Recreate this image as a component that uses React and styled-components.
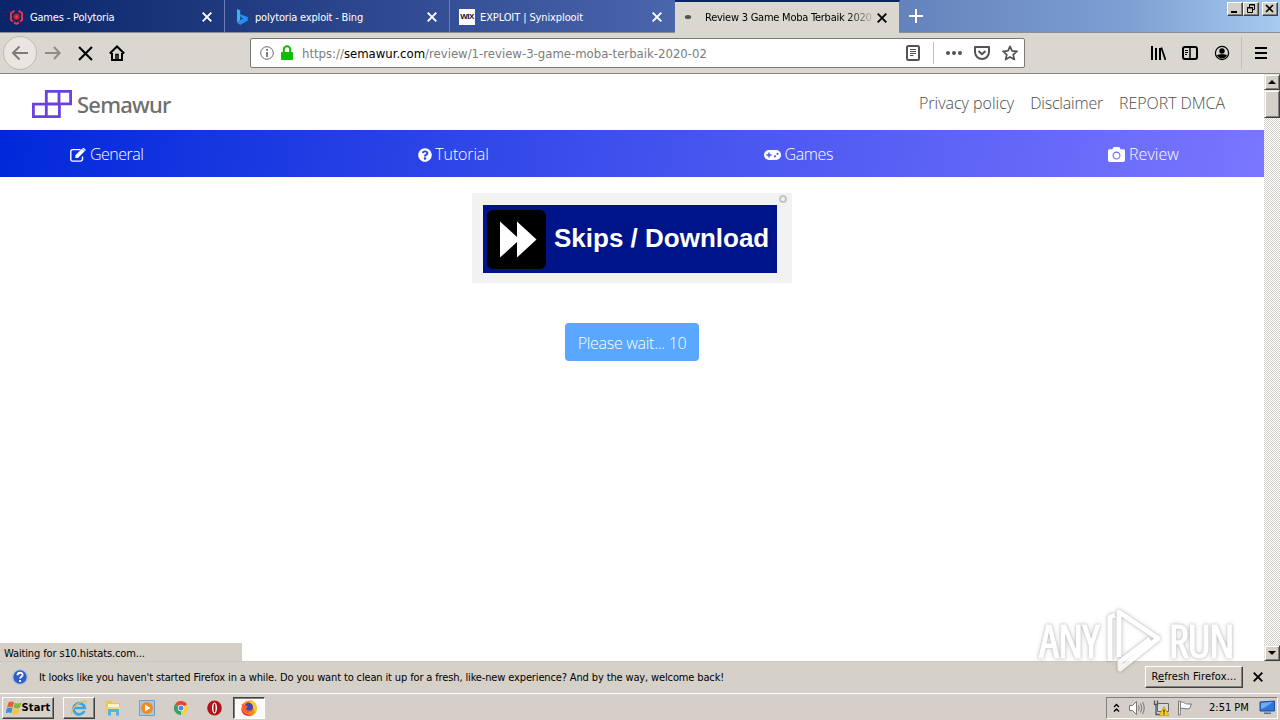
import React from "react";
import styled, { createGlobalStyle, css } from "styled-components";
import { FaEdit, FaQuestionCircle, FaCamera } from "react-icons/fa";

const Global = createGlobalStyle`
  * { box-sizing: border-box; }
  body { margin: 0; background: #fff; overflow: hidden; }
`;

const ui = css`font-family: "DejaVu Sans Condensed", "DejaVu Sans", sans-serif; font-stretch: condensed; font-size: 11px;`;
const light = css`font-family: "Open Sans", "Noto Sans", sans-serif; font-weight: 300; font-stretch: normal;`;

const Desktop = styled.div`
  ${ui}
  width: 1280px;
  height: 720px;
  display: flex;
  flex-direction: column;
  position: relative;
  color: #000;
  overflow: hidden;
`;

const Text = styled.span`
  white-space: pre;
  letter-spacing: ${(p) => p.$track || 0}px;
`;

/* tab strip */
const TabStrip = styled.header`
  height: 33px;
  flex: none;
  display: flex;
  align-items: flex-start;
  background: linear-gradient(90deg, #0a246a 0%, #4762a8 50%, #6685be 72%, #7d9fd2 88%, #a6caf0 100%);
  border-bottom: 1px solid #8b8f96;
`;
const Tab = styled.div`
  width: 225px;
  height: ${(p) => (p.$active ? 33 : 32)}px;
  display: flex;
  align-items: center;
  padding: ${(p) => (p.$active ? 0 : 2)}px 12px 0 9px;
  color: ${(p) => (p.$active ? "#000" : "#fff")};
  background: ${(p) => (p.$active ? "#dad6d0" : "transparent")};
  border-top: ${(p) => (p.$active ? "2px solid #0a246a" : "0")};
  border-right: 1px solid ${(p) => (p.$last ? "transparent" : "#6a80b4")};
  background-clip: padding-box;
  & > svg { flex: none; }
`;
const TabTitle = styled(Text)`
  flex: 1;
  margin-left: ${(p) => p.$gap}px;
  margin-right: ${(p) => (p.$fade ? 4 : 8)}px;
  ${(p) => p.$fade && css`mask-image: linear-gradient(90deg, #000 84%, transparent 102%);`}
`;
const WixBadge = styled.span`
  width: 16px;
  height: 16px;
  background: #fff;
  color: #111;
  font: 700 8px/16px "Liberation Sans", sans-serif;
  letter-spacing: -0.6px;
  text-align: center;
`;
const NewTab = styled.div`
  flex: 1;
  padding: 9px 0 0 9px;
`;
const WindowButtons = styled.div`
  display: flex;
  padding: 2px 2px 0 0;
`;
const WinButton = styled.span`
  width: 16px;
  height: 14px;
  margin-left: ${(p) => (p.$gap ? 3 : 0)}px;
  background: #d4d0c8;
  border: 1px solid;
  border-color: #fff #404040 #404040 #fff;
  box-shadow: inset -1px -1px #808080;
  svg { display: block; }
`;

/* toolbar */
const Toolbar = styled.div`
  height: 41px;
  flex: none;
  display: flex;
  align-items: center;
  background: #dad6d0;
  border-bottom: 1px solid #8a8782;
  padding: 0 11px 0 3px;
`;
const BackButton = styled.span`
  width: 34px;
  height: 34px;
  border: 1px solid #bdb9b3;
  border-radius: 50%;
  background: #e9e6e2;
  display: grid;
  place-items: center;
`;
const Tool = styled.span`
  width: 32px;
  height: 32px;
  display: grid;
  place-items: center;
`;
const AddressBar = styled.div`
  width: 775px;
  height: 30px;
  margin-left: 117px;
  background: #fff;
  border: 1px solid #7b7974;
  border-radius: 2px;
  display: flex;
  align-items: center;
  padding: 0 6px 0 9px;
`;
const LockIcon = styled.svg`
  margin-left: 6px;
`;
const Url = styled(Text)`
  flex: 1;
  margin-left: 8px;
  font-size: 13px;
  color: #7c7c7c;
  b { font-weight: 400; color: #000; }
`;
const Divider = styled.span`
  width: 1px;
  height: ${(p) => p.$h}px;
  background: #c3c0bb;
`;
const Actions = styled.div`
  display: flex;
  align-items: center;
  gap: ${(p) => p.$gap}px;
  margin-left: ${(p) => p.$left || 0}px;
`;

/* page */
const Viewport = styled.main`
  height: 587px;
  flex: none;
  display: flex;
  position: relative;
`;
const Page = styled.div`
  ${light}
  width: 1264px;
  background: #fff;
  font-size: 16px;
`;
const SiteHeader = styled.div`
  height: 56px;
  display: flex;
  align-items: center;
  justify-content: space-between;
  padding: 4px 39px 0 32px;
`;
const Brand = styled.div`
  display: flex;
  align-items: center;
  color: #6f6f6f;
  font: 500 22px/28px "Noto Sans", "Open Sans", sans-serif;
  gap: 5px;
`;
const SiteLinks = styled.nav`
  display: flex;
  gap: 16px;
  padding-bottom: 2px;
  color: #4c4c4c;
`;
const SiteNav = styled.nav`
  height: 47px;
  display: flex;
  align-items: center;
  padding: 2px 85px 0 70px;
  justify-content: space-between;
  color: #fff;
  background: linear-gradient(100deg, #0028da 0%, #3a4deb 45%, #7a76ff 100%);
`;
const NavItem = styled.span`
  display: flex;
  align-items: center;
  gap: ${(p) => p.$gap || 4}px;
  & > ${Text} { padding-bottom: 1px; }
`;
const Content = styled.section`
  display: flex;
  flex-direction: column;
  align-items: center;
  padding-top: 16px;
`;
const AdFrame = styled.div`
  position: relative;
  width: 320px;
  height: 90px;
  background: #f2f2f2;
  padding: 12px 0 0 11px;
`;
const AdButton = styled.div`
  width: 294px;
  height: 68px;
  background: #001489;
  display: flex;
  align-items: center;
  padding-left: 4px;
  gap: 8px;
  color: #fff;
  font: 700 26px/30px "Liberation Sans", Arial, sans-serif;
  & > ${Text} { padding-bottom: 2px; }
`;
const SkipIcon = styled.span`
  width: 59px;
  height: 59px;
  border-radius: 6px;
  background: #000;
`;
const AdInfo = styled.span`
  position: absolute;
  top: 2px;
  right: 5px;
  width: 8px;
  height: 8px;
  border: 2px solid #c4c4c4;
  border-radius: 50%;
`;
const WaitButton = styled.div`
  margin-top: 40px;
  width: 134px;
  height: 38px;
  padding-top: 2px;
  border-radius: 4px;
  background: #59a7ff;
  color: #fff;
  display: grid;
  place-items: center;
`;

/* scroll bar */
const ScrollBar = styled.div`
  width: 16px;
  display: flex;
  flex-direction: column;
  background: repeating-conic-gradient(#fff 0 25%, #d4d0c8 0 50%) 0 0 / 2px 2px;
`;
const ScrollPart = styled.span`
  height: ${(p) => p.$h}px;
  background: #d4d0c8;
  border: 1px solid;
  border-color: #e8e6e0 #404040 #404040 #e8e6e0;
  box-shadow: inset 1px 1px #fff, inset -1px -1px #808080;
  margin-top: ${(p) => (p.$end ? "auto" : 0)};
  display: grid;
  place-items: center;
`;
const Status = styled.div`
  position: absolute;
  left: 0;
  bottom: 0;
  width: 242px;
  height: 18px;
  padding: 4px 0 0 4px;
  line-height: 13px;
  background: #d4d0c8;
`;

/* notification and taskbar */
const Notice = styled.div`
  height: 32px;
  flex: none;
  display: flex;
  align-items: center;
  background: #d5d0c8;
  border-top: 1px solid #c8c9c5;
  padding: 0 17px 2px 12px;
`;
const NoticeText = styled(Text)`
  flex: 1;
  margin-left: 11px;
  padding-top: 1px;
`;
const Raised = styled.span`
  display: flex;
  align-items: center;
  justify-content: center;
  width: ${(p) => p.$w}px;
  height: ${(p) => p.$h}px;
  margin-left: ${(p) => p.$left || 0}px;
  border: 1px solid;
  border-color: #fff #404040 #404040 #fff;
  box-shadow: inset -1px -1px #808080;
  background: #d6d0c9;
`;
const Pressed = styled(Raised)`
  border-color: #404040 #fff #fff #404040;
  box-shadow: inset 1px 1px #808080;
  background: #fbfafa;
`;
const Taskbar = styled.footer`
  flex: 1;
  display: flex;
  align-items: center;
  background: #d6cec8;
  border-top: 1px solid #fff;
  padding: 1px 2px 0 2px;
`;
const Launch = styled.span`
  width: 33.5px;
  display: grid;
  place-items: center;
`;
const Launchers = styled.div`
  display: flex;
  width: 138px;
  padding-left: 2px;
`;
const Tray = styled.div`
  margin-left: auto;
  width: 172px;
  height: 22px;
  border: 1px solid;
  border-color: #808080 #fff #fff #808080;
  display: flex;
  align-items: center;
  padding: 0 1px 0 6px;
`;
const TrayIcons = styled.div`
  display: flex;
  align-items: center;
  gap: 8px;
`;
const Clock = styled(Text)`
  margin-left: 16px;
  flex: 1;
`;
const Watermark = styled.div`
  position: absolute;
  left: 1039px;
  top: 607px;
  width: 194px;
  height: 68px;
  display: flex;
  align-items: center;
  justify-content: space-between;
  color: #fff;
  opacity: 0.75;
  filter: drop-shadow(0 0 1px rgba(90, 90, 90, 0.45)) drop-shadow(0 0 2px rgba(90, 90, 90, 0.35));
  font: 400 45px/68px "Open Sans", sans-serif;
  font-stretch: condensed;
  -webkit-text-stroke: 1.2px #fff;
`;

const Close = ({ color = "#000", size = 10, w = 1.9 }) => (
  <svg width={size} height={size} viewBox="0 0 10 10" stroke={color} strokeWidth={w}>
    <path d="M.7.7l8.6 8.6M9.3.7L.7 9.3" />
  </svg>
);

export default function App() {
  return (
    <Desktop>
      <Global />
      <TabStrip>
        <Tab>
          <svg width="15" height="16" viewBox="0 0 15 16" fill="none" stroke="#e0384a">
            <path d="M5.500 1.800L2 4v7l2 1.500M9.500 1.800L13 4v7l-2 1.500M5 13.500l2.500 1.300 2.500-1.300" strokeWidth="2" />
            <circle cx="7.500" cy="7.700" r="2.400" fill="#f03a40" strokeWidth="1.800" stroke="#b0222e" />
          </svg>
          <TabTitle $gap={6} $track={-0.18}>Games - Polytoria</TabTitle>
          <Close color="#fff" />
        </Tab>
        <Tab>
          <svg width="16" height="16" viewBox="0 0 16 16">
            <path d="M3 0l3.200 1.200v10L3 13.400z" fill="#39b3f5" />
            <path d="M3 13.200l3.200-2 3-1.600L7 8.600 5.600 5l8.200 3v3.600L6.200 16z" fill="#2a8df0" />
          </svg>
          <TabTitle $gap={5} $track={-0.18}>polytoria exploit - Bing</TabTitle>
          <Close color="#fff" />
        </Tab>
        <Tab $last>
          <WixBadge>WIX</WixBadge>
          <TabTitle $gap={5} $track={-0.11}>EXPLOIT | Synixplooit</TabTitle>
          <Close color="#fff" />
        </Tab>
        <Tab $active $last>
          <svg width="16" height="16" viewBox="0 0 16 16"><ellipse cx="4" cy="7" rx="3.200" ry="2" fill="#555" /></svg>
          <TabTitle $gap={5} $track={-0.24} $fade>Review 3 Game Moba Terbaik 2020</TabTitle>
          <Close />
        </Tab>
        <NewTab>
          <svg width="14" height="14" viewBox="0 0 14 14" stroke="#fff" strokeWidth="2"><path d="M7 0v14M0 7h14" /></svg>
        </NewTab>
        <WindowButtons>
          <WinButton><svg width="14" height="12" viewBox="0 0 14 12"><path d="M3 8h6v2H3z" /></svg></WinButton>
          <WinButton>
            <svg width="14" height="12" viewBox="0 0 14 12" fill="none" stroke="#000"><path d="M5.500 4V1.500h5v5H8.500M5 2h6M3.500 4.500h5v5h-5zM3 5h6" /></svg>
          </WinButton>
          <WinButton $gap><svg width="14" height="12" viewBox="0 0 14 12" stroke="#000" strokeWidth="1.600"><path d="M3 2l7 7M10 2L3 9" /></svg></WinButton>
        </WindowButtons>
      </TabStrip>

      <Toolbar>
        <BackButton>
          <svg width="18" height="16" viewBox="0 0 18 16" fill="none" stroke="#7d7a77" strokeWidth="2"><path d="M17 8H2M8.500 1.500L2 8l6.500 6.500" /></svg>
        </BackButton>
        <Tool>
          <svg width="16" height="14" viewBox="0 0 16 14" fill="none" stroke="#8f8c88" strokeWidth="2"><path d="M0 7h14.500M9 1l5.700 6L9 13" /></svg>
        </Tool>
        <Tool><Close size={15} w={1.4} /></Tool>
        <Tool>
          <svg width="16" height="16" viewBox="0 0 16 16" fill="none" stroke="#000" strokeWidth="2">
            <path d="M.8 8.500L8 1.500l7.200 7M3 8v7h10V8" /><path d="M7 9.500h2V15H7z" strokeWidth="1.500" />
          </svg>
        </Tool>
        <AddressBar>
          <svg width="14" height="14" viewBox="0 0 14 14" fill="none" stroke="#6a6a6a"><circle cx="7" cy="7" r="6.300" /><path d="M7 6v5M7 3v1.700" strokeWidth="1.700" /></svg>
          <LockIcon width="14" height="16" viewBox="0 0 14 16" fill="none">
            <rect x="1" y="7" width="12" height="8" rx="1" fill="#12bc00" /><path d="M3.800 8V4.500a3.200 3.200 0 016.400 0V8" stroke="#12bc00" strokeWidth="2" />
          </LockIcon>
          <Url>https://<b>semawur.com</b>/review/1-review-3-game-moba-terbaik-2020-02</Url>
          <svg width="16" height="16" viewBox="0 0 16 16" fill="none" stroke="#55534f"><rect x="2" y="1" width="12" height="14" rx="1.500" strokeWidth="2" /><path d="M5 4.500h6M5 6.500h6M5 8.500h6M5 10.500h3.500" /></svg>
          <Actions $gap={12} $left={12}>
            <Divider $h={22} />
            <svg width="16" height="16" viewBox="0 0 16 16" fill="#55534f"><circle cx="2" cy="8" r="2" /><circle cx="8" cy="8" r="2" /><circle cx="14" cy="8" r="2" /></svg>
            <svg width="16" height="16" viewBox="0 0 16 16" fill="none" stroke="#55534f" strokeWidth="2"><path d="M1 2h14v5a7 7 0 01-14 0zM4.500 6L8 9.300 11.500 6" strokeLinejoin="round" /></svg>
            <svg width="16" height="16" viewBox="0 0 16 16" fill="none" stroke="#55534f" strokeWidth="1.700"><path d="M8 1.300l2 4.600 5 .4-3.800 3.300 1.200 4.900L8 11.900l-4.400 2.600 1.200-4.900L1 6.300l5-.4z" strokeLinejoin="round" /></svg>
          </Actions>
        </AddressBar>
        <Actions $gap={16} $left={125}>
          <svg width="16" height="16" viewBox="0 0 16 16" stroke="#000" strokeWidth="2"><path d="M2 1v14M6 3v12M10 3v12" /><path d="M11.300 2.500L15.500 15" strokeWidth="1.700" /></svg>
          <svg width="16" height="16" viewBox="0 0 16 16" fill="none" stroke="#000" strokeWidth="2"><rect x="1" y="2" width="14" height="12" rx="2" /><path d="M8 2v12" strokeWidth="1.500" /><path d="M3 5.500h3M3 7.500h3M3 9.500h2" strokeWidth="1" /></svg>
          <svg width="16" height="16" viewBox="0 0 16 16"><circle cx="8" cy="8" r="6.600" fill="none" stroke="#000" strokeWidth="1.200" /><circle cx="8" cy="6" r="2.700" /><path d="M3 10.200c1.500-1.400 8.500-1.400 10 0-.8 2-2.800 3.200-5 3.200s-4.200-1.200-5-3.200z" /></svg>
        </Actions>
        <Actions $gap={13} $left={11}>
          <Divider $h={32} />
          <svg width="12" height="14" viewBox="0 0 12 14" stroke="#000" strokeWidth="2"><path d="M0 2h12M0 7h12M0 12h12" /></svg>
        </Actions>
      </Toolbar>

      <Viewport>
        <Page>
          <SiteHeader>
            <Brand>
              <svg width="40" height="28" viewBox="0 0 40 28" fill="none" stroke="#6a42dd" strokeWidth="2.800">
                <path d="M14.300 1.400h24.300v12.400H14.300zM1.400 14.200h26v12.400h-26zM14.300 13v13.500M27 1.300v13" />
              </svg>
              <Text $track={-0.8}>Semawur</Text>
            </Brand>
            <SiteLinks>
              <Text>Privacy policy</Text>
              <Text $track={-0.2}>Disclaimer</Text>
              <Text $track={-0.06}>REPORT DMCA</Text>
            </SiteLinks>
          </SiteHeader>
          <SiteNav>
            <NavItem>
              <svg width="16" height="14" viewBox="0 0 16 14" fill="none" stroke="#fff">
                <path d="M10.500 1.600H2.800A1.900 1.900 0 00.8 3.500v7.700a1.900 1.900 0 002 1.900h7.700a1.900 1.900 0 002-1.900V8.500" strokeWidth="1.400" />
                <path d="M5.300 9.900V7.300L12 .7l2.600 2.600L8 9.900z" fill="#fff" stroke="none" />
                <path d="M12.700 0l2.800 2.600" strokeWidth="1.300" />
              </svg>
              <Text $track={-0.5}>General</Text>
            </NavItem>
            <NavItem $gap={3}><FaQuestionCircle size={14} /><Text $track={-0.15}>Tutorial</Text></NavItem>
            <NavItem>
              <svg width="17" height="10" viewBox="0 0 17 10">
                <rect width="17" height="10" rx="5" fill="#fff" />
                <path d="M5 2.500v5M2.500 5h5" stroke="#4553ee" strokeWidth="1.400" />
                <circle cx="11" cy="6.300" r="1.100" fill="#4553ee" /><circle cx="13.500" cy="3.800" r="1.100" fill="#4553ee" />
              </svg>
              <Text $track={-0.4}>Games</Text>
            </NavItem>
            <NavItem><FaCamera size={17} /><Text $track={0.06}>Review</Text></NavItem>
          </SiteNav>
          <Content>
            <AdFrame>
              <AdButton>
                <SkipIcon><svg width="59" height="59" viewBox="0 0 59 59" fill="#fff"><path d="M13 11.500l17 15.500V11.500L49.500 29.500 30 47.500V32L13 47.500z" /></svg></SkipIcon>
                <Text>Skips / Download</Text>
              </AdButton>
              <AdInfo />
            </AdFrame>
            <WaitButton><Text $track={-0.28}>Please wait... 10</Text></WaitButton>
          </Content>
        </Page>
        <ScrollBar>
          <ScrollPart $h={16}><svg width="8" height="4" viewBox="0 0 8 4"><path d="M0 4l4-4 4 4z" /></svg></ScrollPart>
          <ScrollPart $h={28} />
          <ScrollPart $h={16} $end><svg width="8" height="4" viewBox="0 0 8 4"><path d="M0 0l4 4 4-4z" /></svg></ScrollPart>
        </ScrollBar>
        <Status><Text $track={-0.13}>Waiting for s10.histats.com...</Text></Status>
      </Viewport>

      <Notice>
        <svg width="16" height="16" viewBox="0 0 16 16"><circle cx="8" cy="8" r="7.300" fill="#2f5fc4" stroke="#a9bfe8" strokeWidth="1.300" /><path d="M5.500 6.200C5.500 3 10.600 3 10.600 6c0 1.700-2.500 1.900-2.500 3.600M8.100 11v1.900" fill="none" stroke="#fff" strokeWidth="1.900" /></svg>
        <NoticeText $track={-0.138}>It looks like you haven't started Firefox in a while. Do you want to clean it up for a fresh, like-new experience? And by the way, welcome back!</NoticeText>
        <Raised $w={98} $h={22}><Text $track={0.14}>R<u>e</u>fresh Firefox...</Text></Raised>
        <Actions $left={10}><Close /></Actions>
      </Notice>

      <Taskbar>
        <Raised $w={52} $h={22}>
          <svg width="16" height="16" viewBox="0 0 16 16">
            <path d="M2.500 2.500C4.500 1 6.500 1.300 8 2.300L6.700 7.400C5 6.400 3 6.400 1 7.600z" fill="#e8602c" />
            <path d="M8.800 2.700c2 1 4.200 1.200 6.700-.2l-1.600 5c-2.200 1.300-4.300 1.200-6.300.2z" fill="#7dbb3c" />
            <path d="M.8 8.500c2-1.200 4-1.200 5.700-.2l-1.300 5C3.600 12.300 1.600 12.300-.5 13.500z" fill="#3d8fd8" />
            <path d="M7.300 8.700c2 1 4.200 1.200 6.400 0l-1.500 5c-2.300 1.200-4.400 1-6.300-.2z" fill="#f6c33a" />
          </svg>
          <Text $track={0.15}><b>Start</b></Text>
        </Raised>
        <Raised $w={32} $h={22} $left={9}>
          <svg width="18" height="18" viewBox="0 0 18 18" fill="none">
            <path d="M14.300 12a5.600 5.600 0 11.400-3H5" stroke="#35a7e4" strokeWidth="2.700" />
            <path d="M2 15.500C.2 12 5.500 5 12 2.500c3-1.100 4.600-.5 4 2" stroke="#e8bc3d" strokeWidth="1.300" />
          </svg>
        </Raised>
        <Launchers>
          <Launch>
            <svg width="17" height="16" viewBox="0 0 17 16">
              <path d="M1 1h6l1 2h7v10H1z" fill="#e8c85a" /><path d="M3 4h11v5H3z" fill="#fdf5c4" /><path d="M2 7h13v6H2z" fill="#f3da78" />
              <path d="M3 15.500V9h11v6.500h-3V12H6v3.500z" fill="#58aee6" />
            </svg>
          </Launch>
          <Launch>
            <svg width="16" height="16" viewBox="0 0 16 16"><path d="M.5.5h15v15H.5z" fill="#a9c8e6" stroke="#6f9fce" /><circle cx="8" cy="8" r="6" fill="#f28a1c" /><path d="M6 4.500L11.500 8 6 11.500z" fill="#fff" /></svg>
          </Launch>
          <Launch>
            <svg width="14" height="14" viewBox="0 0 14 14">
              <path d="M7 7L.9 3.500A7 7 0 0113.100 3.500z" fill="#e2473a" /><path d="M7 7L.9 3.500A7 7 0 007 14z" fill="#34a55b" /><path d="M7 7h0l6.100-3.500A7 7 0 017 14z" fill="#fbcf3b" />
              <circle cx="7" cy="7" r="3.200" fill="#fff" /><circle cx="7" cy="7" r="2.500" fill="#4a87ee" />
            </svg>
          </Launch>
          <Launch>
            <svg width="15" height="16" viewBox="0 0 15 16"><ellipse cx="7.500" cy="8" rx="7.300" ry="7.600" fill="#b31217" /><ellipse cx="7.500" cy="8" rx="2.500" ry="5.600" fill="#fff" /><ellipse cx="7.500" cy="8" rx="1" ry="4.600" fill="#8b0c10" /></svg>
          </Launch>
        </Launchers>
        <Pressed $w={32} $h={22}>
          <svg width="18" height="18" viewBox="0 0 18 18">
            <circle cx="9" cy="9.500" r="7.700" fill="#fb8a1e" />
            <path d="M9 1c4.500 0 8 3.500 8 8 0 3-1 5-3 6.500 1-4 0-7-3-8.500z" fill="#fcc62e" />
            <circle cx="8.700" cy="8" r="4.300" fill="#3f46b8" />
            <path d="M1.400 4.500c.6 1 1.800 1 3 1.200L8 7.500 6 9.500c1 2.500 4 2.500 5.500 1.500 0 3-6 4.500-8.500.5z" fill="#ff5f2e" />
            <path d="M1.500 8c.5 6 6 8.600 10.500 7.600-3 2.500-10.500 1-10.500-5.100z" fill="#ee2f55" />
          </svg>
        </Pressed>
        <Tray>
          <TrayIcons>
            <svg width="7" height="10" viewBox="0 0 7 10" fill="none" stroke="#000" strokeWidth="1.400"><path d="M1 4l2.500-2.500L6 4M1 8.500L3.500 6 6 8.500" /></svg>
            <svg width="17" height="16" viewBox="0 0 17 16" fill="#fff" stroke="#777"><path d="M1.500 5.500h3l4-4v13l-4-4h-3z" /><path d="M10.500 5.500q1.500 2.500 0 5M12.500 3.500q3 4.500 0 9M14.500 2q3.500 6 0 12" fill="none" /></svg>
            <svg width="16" height="16" viewBox="0 0 16 16"><path d="M4.500 3.500h11v8h-11z" fill="#d8d8d8" stroke="#666" /><path d="M1.500.5v4h3v-4M3 5v9.500h5" fill="none" stroke="#555" strokeWidth="1.300" /><path d="M11 6.500l5 9H6z" fill="#f8cf1c" stroke="#b8920a" strokeWidth=".6" /><path d="M11 9.500v3M11 13.300v1.200" stroke="#222" strokeWidth="1.200" /></svg>
            <svg width="16" height="16" viewBox="0 0 16 16" fill="#fff" stroke="#777"><path d="M3.500 2.500c3-1.500 4 1.500 7 1.500h4l-2 4.500c-4 1.500-5-1-9 0z" /><path d="M1.500 1v14h1.800V1z" /></svg>
          </TrayIcons>
          <Clock>2:51 PM</Clock>
          <svg width="17" height="15" viewBox="0 0 17 15"><path d="M1 2l14.500-1v10L1 11z" fill="#2f75d8" stroke="#1d4f9c" /><path d="M2 3l12-1-9 6-3 1z" fill="#6fa9ee" /><path d="M5 12.500h7v1.500H5z" fill="#59718f" /></svg>
        </Tray>
      </Taskbar>

      <Watermark>
        <Text $track={-0.8}>ANY</Text>
        <svg width="58" height="66" viewBox="0 0 58 66" fill="none" stroke="#fff" strokeWidth="5" strokeLinejoin="round">
          <path d="M5 53V9l5-2M14 49V4l39 26.500L15 61v-7l30-23" />
        </svg>
        <Text $track={-1.6}>RUN</Text>
      </Watermark>
    </Desktop>
  );
}
